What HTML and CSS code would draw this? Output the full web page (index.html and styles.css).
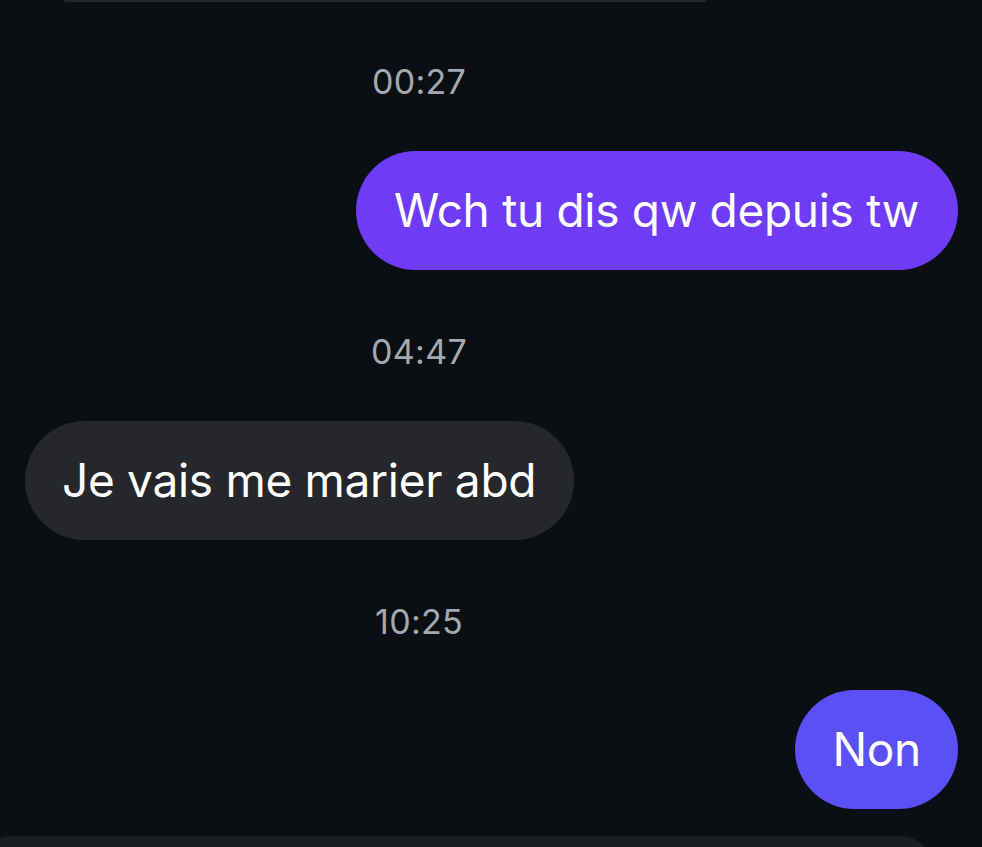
FILE: index.html
```html
<!DOCTYPE html>
<html lang="fr">
<head>
<meta charset="utf-8">
<title>Messages</title>
<link rel="stylesheet" href="styles.css">
</head>
<body>
<main class="thread">
  <div class="prev-slice"></div>

  <div class="time t-first">00:27</div>
  <div class="row row-out">
    <div class="bubble bubble-out-a">Wch tu dis qw depuis tw</div>
  </div>

  <div class="time">04:47</div>
  <div class="row row-in">
    <div class="bubble bubble-in">Je vais me marier abd</div>
  </div>

  <div class="time">10:25</div>
  <div class="row row-out row-last">
    <div class="bubble bubble-out-b">Non</div>
  </div>

  <div class="next-slice"></div>
</main>
</body>
</html>
```

FILE: styles.css
```css
html, body {
  margin: 0;
  padding: 0;
  background: #0b0f13;
}

body {
  width: 982px;
  height: 847px;
  overflow: hidden;
  font-family: "Inter", "Roboto", "Liberation Sans", sans-serif;
  color: #ffffff;
}

.thread {
  display: flex;
  flex-direction: column;
}

.prev-slice {
  width: 642px;
  height: 2px;
  margin-left: 64px;
  background: #24272b;
  border-radius: 0 0 2px 2px;
}

.time {
  width: 838px;
  height: 40px;
  line-height: 40px;
  text-align: center;
  font-size: 34px;
  color: #a3a9b0;
  letter-spacing: 0.3px;
  margin-top: 62px;
}

.time.t-first {
  margin-top: 60px;
}

.row {
  display: flex;
  margin-top: 49px;
}

.row.row-last {
  margin-top: 48px;
}

.row-out {
  justify-content: flex-end;
  padding-right: 24px;
}

.row-in {
  justify-content: flex-start;
  padding-left: 25px;
}

.bubble {
  height: 119px;
  box-sizing: border-box;
  padding: 0 38px 0 38px;
  border-radius: 60px;
  font-size: 46px;
  line-height: 119px;
  white-space: nowrap;
  letter-spacing: -0.3px;
}

.bubble-out-a {
  background: #6f3cf6;
  padding-right: 39px;
}

.bubble-out-b {
  background: #5a50f5;
  padding: 0 37px;
}

.bubble-in {
  background: #25272b;
  padding-left: 37px;
}

.next-slice {
  width: 951px;
  height: 40px;
  margin-left: -20px;
  margin-top: 27px;
  background: #1b1e21;
  border-radius: 30px 30px 0 0;
}
```
